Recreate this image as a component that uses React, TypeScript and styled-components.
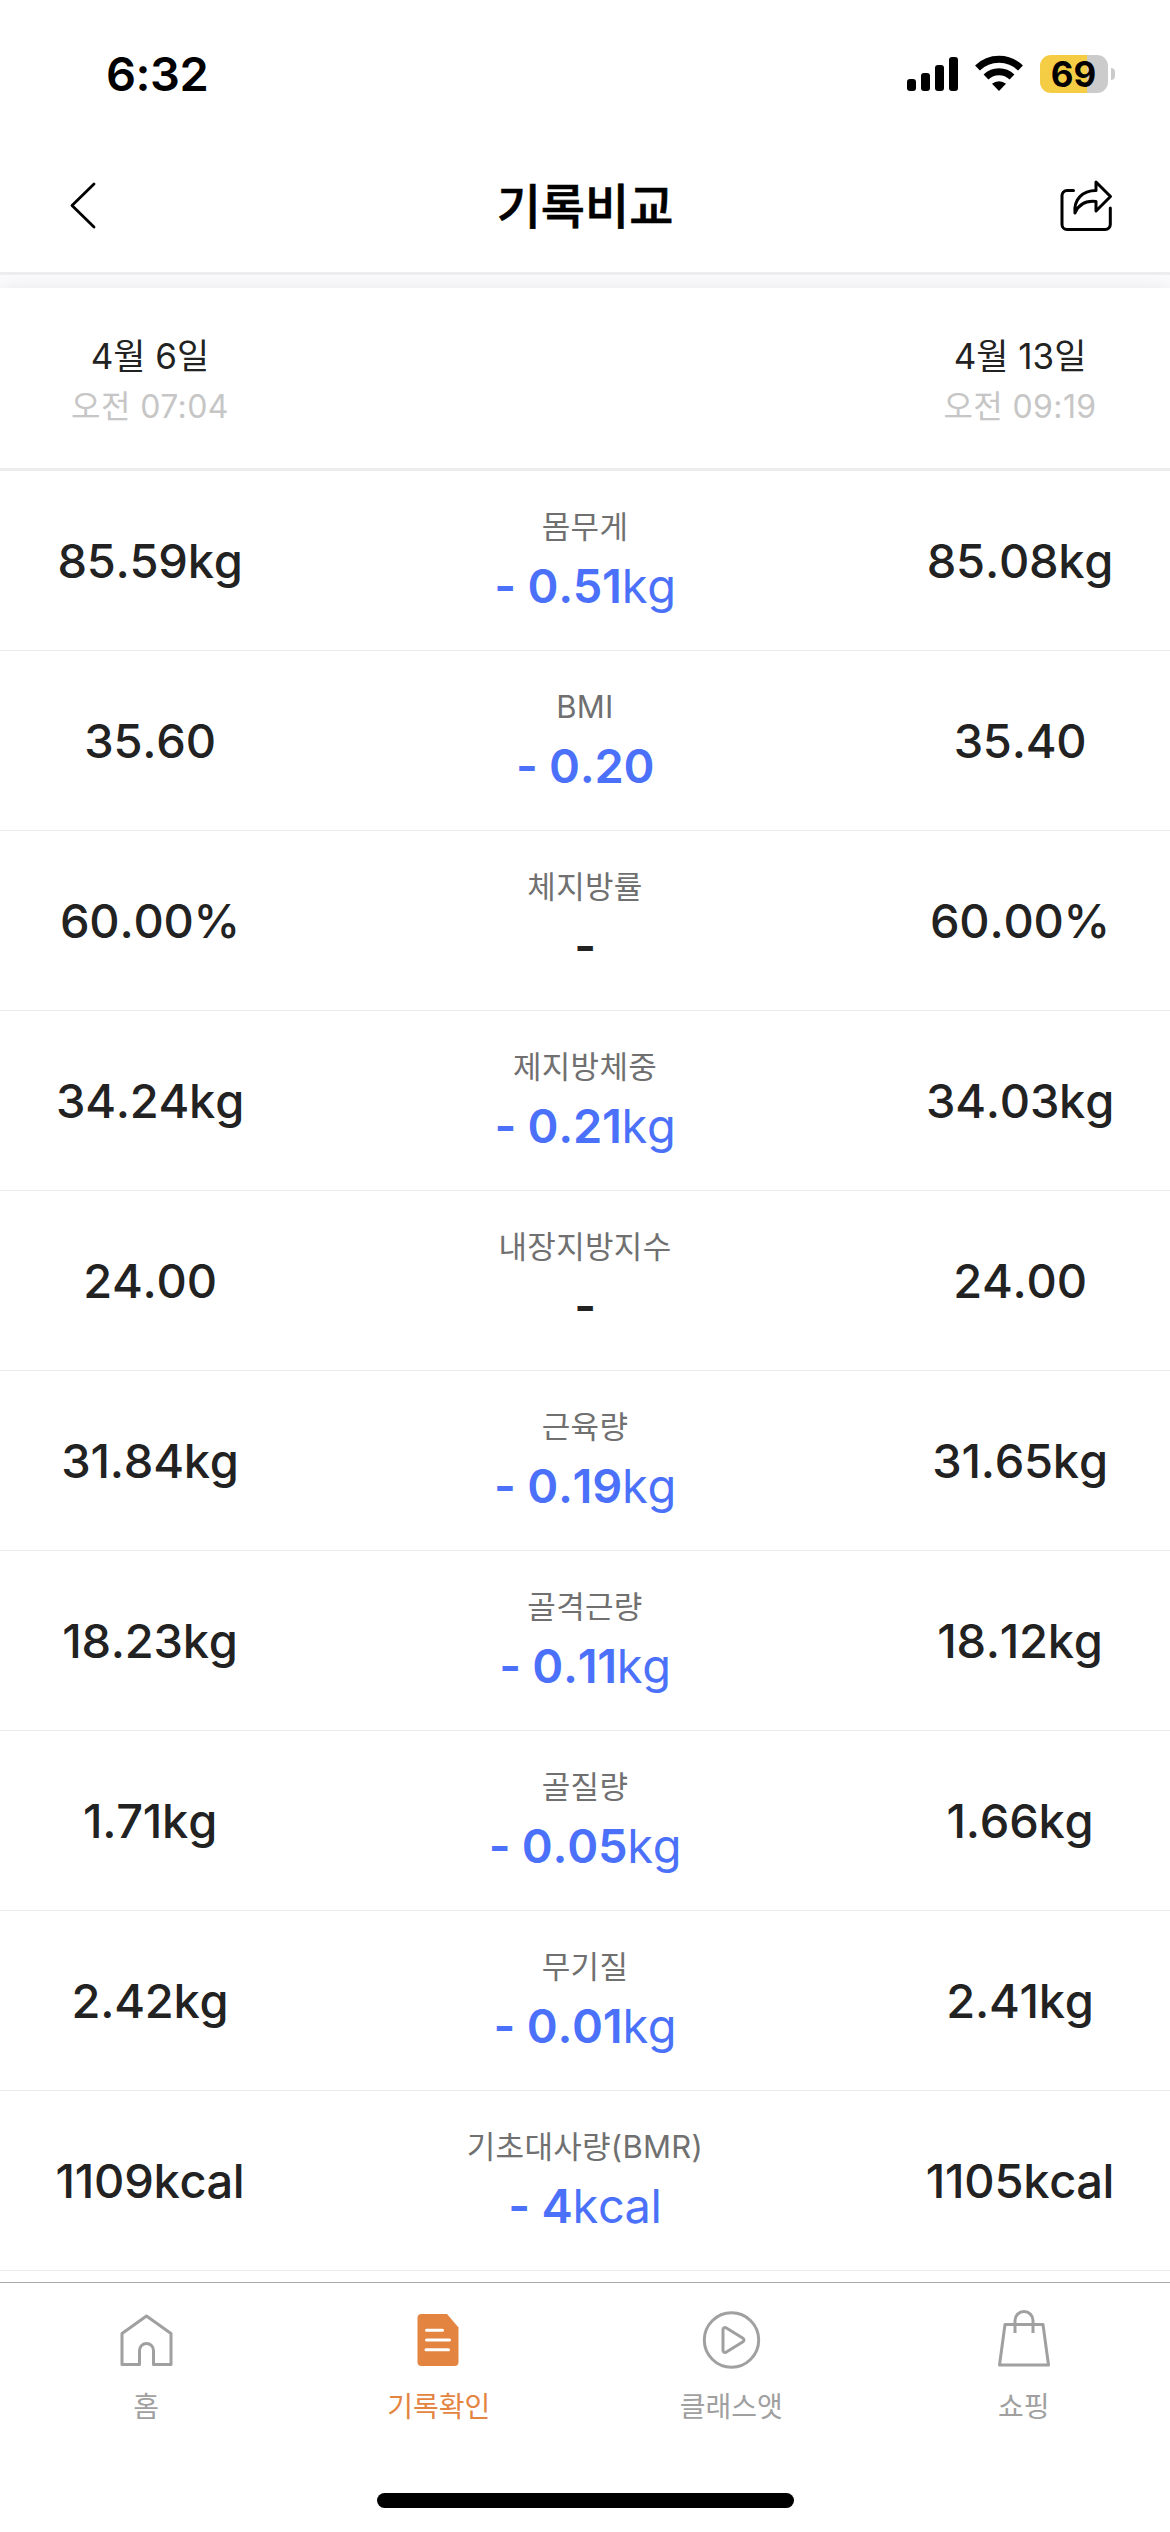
import React from "react";
import styled, { createGlobalStyle } from "styled-components";

const GlobalStyle = createGlobalStyle`
  * { box-sizing: border-box; }
  body {
    margin: 0;
    background: #fff;
    font-family: Inter, "Noto Sans CJK KR", sans-serif;
    font-feature-settings: "calt" 0;
  }
`;

const Screen = styled.div`
  width: 1170px;
  height: 2532px;
  display: flex;
  flex-direction: column;
  background: #fff;
  overflow: hidden;
`;

const StatusBar = styled.div`
  height: 141px;
  display: flex;
  justify-content: space-between;
  align-items: flex-start;
  padding: 55px 55px 0 106px;
`;

const Clock = styled.div`
  font-size: 47px;
  line-height: 38px;
  font-weight: 600;
  letter-spacing: -0.5px;
  color: #000;
`;

const StatusIcons = styled.div`
  display: flex;
  align-items: flex-start;
`;

const Battery = styled.div`
  width: 68px;
  height: 38px;
  margin-left: 17px;
  border-radius: 11px;
  background: linear-gradient(to right, #f5cd45 47px, #cbcbcb 47px);
  display: flex;
  align-items: center;
  justify-content: center;
  padding-right: 1px;
  font-size: 35px;
  line-height: 38px;
  font-weight: 650;
  color: #000;
`;

const BatteryNub = styled.div`
  width: 4px;
  height: 12px;
  margin: 13px 0 0 3px;
  border-radius: 0 4px 4px 0;
  background: #cbcbcb;
`;

const TitleBar = styled.header`
  height: 134px;
  padding: 0 55px 1px 67px;
  border-bottom: 3px solid #ededed;
  display: grid;
  grid-template-columns: 200px 1fr 200px;
  align-items: center;
  & > svg:last-child { justify-self: end; }
`;

const Title = styled.h1`
  margin: 2px 0 0;
  text-align: center;
  font-size: 48px;
  line-height: 60px;
  font-weight: 500;
  -webkit-text-stroke: 0.6px #000;
  color: #000;
  padding-right: 12px;
`;

const Gutter = styled.div`
  height: 13px;
  flex: none;
  background: #fbfbfd;
`;

const DateHeader = styled.section`
  height: 183px;
  flex: none;
  display: grid;
  grid-template-columns: 300px 1fr 300px;
  background: #fff;
  border-bottom: 3px solid #ededed;
  box-shadow: 0 0 18px rgba(0, 0, 0, 0.08);
  clip-path: inset(-13px 0 0 0);
`;

const DateCell = styled.div`
  display: flex;
  flex-direction: column;
  align-items: center;
  padding-top: 43px;
`;

const Day = styled.div`
  font-size: 35px;
  line-height: 50px;
  color: #222;
`;

const Time = styled.div`
  margin-top: 1px;
  font-size: 32px;
  line-height: 50px;
  letter-spacing: 0.4px;
  color: #c6c6c6;
`;

const Row = styled.div`
  height: 180px;
  flex: none;
  display: grid;
  grid-template-columns: 300px 1fr 300px;
  border-bottom: 1px solid #ebebeb;
`;

const Value = styled.div`
  padding-top: 60px;
  text-align: center;
  font-size: 47px;
  line-height: 60px;
  font-weight: 500;
  font-kerning: none;
  letter-spacing: -0.25px;
  color: #222;
`;

const Middle = styled.div`
  display: flex;
  flex-direction: column;
  align-items: center;
  padding-top: 34px;
`;

const Label = styled.div`
  font-size: 31px;
  line-height: 44px;
  letter-spacing: 0.3px;
  color: #707070;
`;

const Delta = styled.div<{ $same?: boolean }>`
  margin-top: 7px;
  font-size: 47px;
  line-height: 60px;
  font-weight: 600;
  font-kerning: none;
  letter-spacing: -0.3px;
  color: ${(p) => (p.$same ? "#222" : "#4b71fa")};
`;

const Unit = styled.span`
  font-weight: 400;
`;

const TabBar = styled.nav`
  margin-top: 11px;
  height: 211px;
  flex: none;
  border-top: 1px solid #aaa;
  display: grid;
  grid-template-columns: repeat(4, 1fr);
`;

const Tab = styled.div<{ $active?: boolean }>`
  display: flex;
  flex-direction: column;
  align-items: center;
  padding-top: 24px;
  font-size: 28px;
  line-height: 40px;
  color: ${(p) => (p.$active ? "#e38541" : "#a0a0a0")};
  & > svg { margin-bottom: 14px; }
`;

const HomeIndicator = styled.div`
  width: 417px;
  height: 15px;
  flex: none;
  align-self: center;
  border-radius: 8px;
  background: #000;
`;

const Signal = () => (
  <svg width="52" height="38" viewBox="0 0 52 38">
    <rect x="0" y="24" width="9" height="12" rx="3" />
    <rect x="14" y="18" width="9" height="18" rx="3" />
    <rect x="28" y="10" width="9" height="26" rx="3" />
    <rect x="42" y="2" width="9" height="34" rx="3" />
  </svg>
);

const WifiSvg = styled.svg`
  margin-left: 16px;
`;

const Wifi = () => (
  <WifiSvg width="48" height="38" viewBox="0 0 48 38">
    <g fill="none" stroke="#000" strokeWidth="7">
      <path d="M2.500 13a31 31 0 0 1 43 0" />
      <path d="M11 22a18.800 18.800 0 0 1 26 0" />
    </g>
    <path d="M24 36l-7-7.200a10.500 10.500 0 0 1 14 0z" />
  </WifiSvg>
);

const BackIcon = () => (
  <svg width="32" height="52" viewBox="0 0 32 52" fill="none" stroke="#000" strokeWidth="2.800" strokeLinecap="round" strokeLinejoin="round">
    <path d="M27 4L5 25.500l22 21.500" />
  </svg>
);

const ShareIcon = () => (
  <svg width="56" height="54" viewBox="0 0 56 54" fill="none" stroke="#000" strokeWidth="3" strokeLinecap="round" strokeLinejoin="round">
    <path d="M14.500 11.500H8a5 5 0 0 0-5 5V45.500a5 5 0 0 0 5 5H46.300a5 5 0 0 0 5-5V29" />
    <path d="M37 3L51.500 17.500L37 32V22.500C28 21.500 20 24.500 16 34C14.500 21 23 11.500 37 11.500Z" />
  </svg>
);

const HomeIcon = () => (
  <svg width="60" height="66" viewBox="0 0 60 66" fill="none" stroke="#a0a0a0" strokeWidth="3" strokeLinejoin="round">
    <path d="M30.500 9L55 26.500V57.500H37.500V43.500a7 7 0 0 0-14 0V57.500H6V26.500Z" />
  </svg>
);

const RecordIcon = () => (
  <svg width="60" height="66" viewBox="0 0 60 66">
    <path fill="#e38541" d="M12.500 7H38L49.500 20.500V55a4 4 0 0 1-4 4H12.500a4 4 0 0 1-4-4V11a4 4 0 0 1 4-4z" />
    <g stroke="#fff" strokeWidth="3" strokeLinecap="round">
      <path d="M17.500 23.300H33.500M17.500 33H40.500M17 42.700H39.500" />
    </g>
  </svg>
);

const ClassIcon = () => (
  <svg width="60" height="66" viewBox="0 0 60 66" fill="none" stroke="#a0a0a0" strokeWidth="3" strokeLinejoin="round">
    <circle cx="30.500" cy="33" r="27.200" />
    <path d="M22 22.500a2 2 0 0 1 3-1.700L42 31.300a2 2 0 0 1 0 3.400L25 45.200a2 2 0 0 1-3-1.700z" />
  </svg>
);

const ShopIcon = () => (
  <svg width="60" height="66" viewBox="0 0 60 66" fill="none" stroke="#a0a0a0" strokeWidth="3" strokeLinejoin="round">
    <path d="M11 17.500H49L54.500 58H5.500Z" />
    <path d="M21 26V13.500a9 9 0 0 1 18 0V26" />
  </svg>
);

type Rec = { before: string; label: string; diff?: string; unit?: string; after: string };

const records: Rec[] = [
  { before: "85.59kg", label: "몸무게", diff: "- 0.51", unit: "kg", after: "85.08kg" },
  { before: "35.60", label: "BMI", diff: "- 0.20", after: "35.40" },
  { before: "60.00%", label: "체지방률", after: "60.00%" },
  { before: "34.24kg", label: "제지방체중", diff: "- 0.21", unit: "kg", after: "34.03kg" },
  { before: "24.00", label: "내장지방지수", after: "24.00" },
  { before: "31.84kg", label: "근육량", diff: "- 0.19", unit: "kg", after: "31.65kg" },
  { before: "18.23kg", label: "골격근량", diff: "- 0.11", unit: "kg", after: "18.12kg" },
  { before: "1.71kg", label: "골질량", diff: "- 0.05", unit: "kg", after: "1.66kg" },
  { before: "2.42kg", label: "무기질", diff: "- 0.01", unit: "kg", after: "2.41kg" },
  { before: "1109kcal", label: "기초대사량(BMR)", diff: "- 4", unit: "kcal", after: "1105kcal" },
];

export default function App() {
  return (
    <Screen>
      <GlobalStyle />
      <StatusBar>
        <Clock>6:32</Clock>
        <StatusIcons>
          <Signal />
          <Wifi />
          <Battery>69</Battery>
          <BatteryNub />
        </StatusIcons>
      </StatusBar>
      <TitleBar>
        <BackIcon />
        <Title>기록비교</Title>
        <ShareIcon />
      </TitleBar>
      <Gutter />
      <DateHeader>
        <DateCell>
          <Day>4월 6일</Day>
          <Time>오전 07:04</Time>
        </DateCell>
        <span />
        <DateCell>
          <Day>4월 13일</Day>
          <Time>오전 09:19</Time>
        </DateCell>
      </DateHeader>
      {records.map((r) => (
        <Row key={r.label}>
          <Value>{r.before}</Value>
          <Middle>
            <Label>{r.label}</Label>
            <Delta $same={!r.diff}>
              {r.diff ?? "-"}
              {r.unit && <Unit>{r.unit}</Unit>}
            </Delta>
          </Middle>
          <Value>{r.after}</Value>
        </Row>
      ))}
      <TabBar>
        <Tab><HomeIcon />홈</Tab>
        <Tab $active><RecordIcon />기록확인</Tab>
        <Tab><ClassIcon />클래스앳</Tab>
        <Tab><ShopIcon />쇼핑</Tab>
      </TabBar>
      <HomeIndicator />
    </Screen>
  );
}
